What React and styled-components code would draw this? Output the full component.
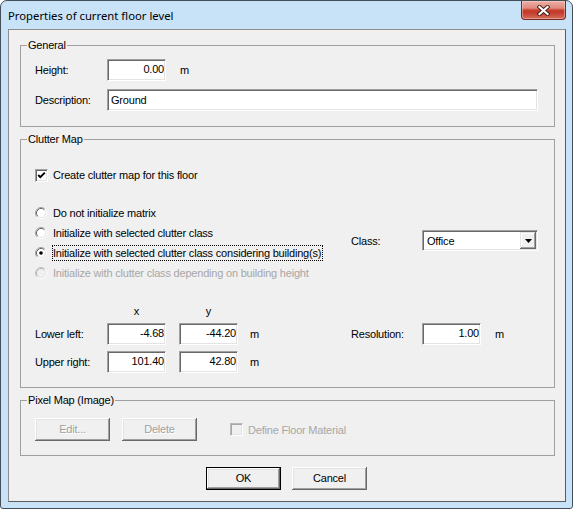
import React from 'react';
import styled, { createGlobalStyle } from 'styled-components';

const GlobalStyle = createGlobalStyle`
  html, body {
    margin: 0;
    padding: 0;
    background: #ffffff;
  }
  body {
    font-family: "Liberation Sans", Arial, sans-serif;
  }
`;

const font = `
  font-family: "Liberation Sans", Arial, sans-serif;
  font-size: 11px;
  letter-spacing: -0.2px;
`;

const Window = styled.div`
  width: 573px;
  height: 509px;
  box-sizing: border-box;
  background: #c8e3f8;
  border: 1px solid #434e58;
  border-radius: 7px 7px 3px 3px;
  display: flex;
  flex-direction: column;
  overflow: hidden;
`;

const TitleBar = styled.div`
  height: 28px;
  flex: none;
  display: flex;
  justify-content: space-between;
  align-items: flex-start;
  padding: 0 6px 0 7px;
`;

const Title = styled.span`
  align-self: center;
  font-family: "Noto Sans", "Open Sans", sans-serif;
  font-size: 11.3px;
  color: #000;
  margin-top: 1px;
`;

const CloseButton = styled.div`
  width: 45px;
  height: 19px;
  box-sizing: border-box;
  border: 1px solid #6f2b22;
  border-top: none;
  border-radius: 0 0 4px 4px;
  background: linear-gradient(
    #eab0a6 0%,
    #e0897b 40%,
    #c9402f 50%,
    #c13a2a 62%,
    #d56b5c 100%
  );
  box-shadow: inset 0 0 0 1px rgba(255, 220, 210, 0.45);
  display: flex;
  align-items: center;
  justify-content: center;
`;

const Client = styled.div`
  flex: 1;
  margin: 0 6px 6px 7px;
  background: #f0f0f0;
  border: 1px solid;
  border-color: #8d8d8d #5c5c5c #5c5c5c #8d8d8d;
  padding: 15px 10px 11px 11px;
  display: flex;
  flex-direction: column;
`;

const Group = styled.div`
  position: relative;
  border: 1px solid #a0a0a0;
  margin-top: ${p => p.$mt || 0}px;
  padding: ${p => p.$pad};
  display: flex;
  flex-direction: column;
`;

const Caption = styled.span`
  ${font}
  position: absolute;
  top: -8px;
  left: 6px;
  padding: 0 1px;
  line-height: 14px;
  background: #f0f0f0;
  color: #000;
`;

const Row = styled.div`
  display: flex;
  align-items: center;
  height: ${p => p.$h || 22}px;
  margin-top: ${p => p.$mt || 0}px;
`;

const Label = styled.span`
  ${font}
  color: ${p => (p.$disabled ? '#a7a7a7' : '#000')};
  width: ${p => (p.$w ? `${p.$w}px` : 'auto')};
  margin-left: ${p => p.$ml || 0}px;
  flex: none;
  white-space: nowrap;
`;

const Field = styled.input`
  ${font}
  box-sizing: border-box;
  width: ${p => p.$w || 59}px;
  height: 22px;
  margin: 0 0 0 ${p => p.$ml || 0}px;
  padding: 0 1px ${p => (p.$num ? 2 : 1)}px 3px;
  border: 1px solid;
  border-color: #a0a0a0 #ffffff #ffffff #a0a0a0;
  box-shadow: inset 1px 1px 0 #696969, inset -1px -1px 0 #e3e3e3;
  background: #fff;
  color: #000;
  text-align: ${p => (p.$num ? 'right' : 'left')};
  outline: none;
  flex: none;
`;

const CheckBox = styled.span`
  width: 13px;
  height: 13px;
  box-sizing: border-box;
  flex: none;
  border: 1px solid;
  border-color: ${p =>
    p.$disabled ? '#b9b9b9 #ffffff #ffffff #b9b9b9' : '#a0a0a0 #ffffff #ffffff #a0a0a0'};
  box-shadow: ${p =>
    p.$disabled
      ? 'inset 1px 1px 0 #a7a7a7, inset -1px -1px 0 #e3e3e3'
      : 'inset 1px 1px 0 #696969, inset -1px -1px 0 #e3e3e3'};
  background: ${p => (p.$disabled ? '#f0f0f0' : '#fff')};
  margin-left: ${p => p.$ml || 0}px;
  display: flex;
  align-items: center;
  justify-content: center;
`;

const RadioList = styled.div`
  width: 316px;
  display: flex;
  flex-direction: column;
`;

const RadioRow = styled.div`
  display: flex;
  align-items: center;
  height: 20px;
`;

const RadioText = styled.span`
  ${font}
  color: ${p => (p.$disabled ? '#a7a7a7' : '#000')};
  white-space: nowrap;
  line-height: 14px;
  margin-left: ${p => (p.$focus ? 5 : 6)}px;
  padding-right: ${p => (p.$focus ? 1 : 0)}px;
  border: ${p => (p.$focus ? '1px dotted #000' : 'none')};
`;

const Options = styled.div`
  display: flex;
  margin-top: 20px;
`;

const ClassCell = styled.div`
  display: flex;
  align-items: center;
  padding-top: 27px;
  align-self: flex-start;
`;

const Combo = styled.div`
  width: 116px;
  height: 21px;
  box-sizing: border-box;
  border: 1px solid;
  border-color: #a0a0a0 #ffffff #ffffff #a0a0a0;
  box-shadow: inset 1px 1px 0 #696969, inset -1px -1px 0 #e3e3e3;
  background: #fff;
  padding: 1px;
  display: flex;
  align-items: center;
`;

const ComboText = styled.span`
  ${font}
  flex: 1;
  padding-left: 3px;
  color: #000;
`;

const DropButton = styled.span`
  width: 16px;
  height: 17px;
  box-sizing: border-box;
  background: #f0f0f0;
  box-shadow: inset -1px -1px 0 #696969, inset 1px 1px 0 #e3e3e3,
    inset -2px -2px 0 #a0a0a0, inset 2px 2px 0 #ffffff;
  display: flex;
  align-items: center;
  justify-content: center;
`;

const Axis = styled.span`
  ${font}
  width: 59px;
  text-align: center;
  margin-left: ${p => p.$ml || 0}px;
  color: #000;
`;

const Button = styled.button`
  ${font}
  width: 75px;
  height: 23px;
  flex: none;
  box-sizing: border-box;
  margin: 0 0 0 ${p => p.$ml || 0}px;
  padding: 0 0 1px;
  background: #f0f0f0;
  color: ${p => (p.disabled ? '#a0a0a0' : '#000')};
  text-shadow: ${p => (p.disabled ? '1px 1px 0 #ffffff' : 'none')};
  border: ${p => (p.$default ? '1px solid #000' : 'none')};
  box-shadow: inset -1px -1px 0 #696969, inset 1px 1px 0 #ffffff,
    inset -2px -2px 0 #a0a0a0, inset 2px 2px 0 #e3e3e3;
  cursor: default;
`;

const Footer = styled.div`
  display: flex;
  justify-content: center;
  margin-top: 11px;
  padding-right: 2px;
`;

const CloseGlyph = () => (
  <svg width="13" height="11" viewBox="0 0 13 11">
    <path d="M2.5 2 L10.5 9 M10.5 2 L2.5 9" stroke="#4a1a14" strokeWidth="4" strokeLinecap="square" />
    <path d="M2.5 2 L10.5 9 M10.5 2 L2.5 9" stroke="#ffffff" strokeWidth="2.2" strokeLinecap="square" />
  </svg>
);

const CheckMark = () => (
  <svg width="9" height="9" viewBox="0 0 9 9">
    <path d="M1.2 4 L3.3 6.2 L7.8 1.6" fill="none" stroke="#000" strokeWidth="1.9" />
  </svg>
);

const Radio = ({ checked, disabled }) => (
  <svg width="12" height="12" viewBox="0 0 12 12" style={{ flex: 'none' }}>
    <circle cx="6" cy="6" r="4.2" fill={disabled ? '#f0f0f0' : '#fff'} />
    <path d="M2.11 9.89 A5.5 5.5 0 0 1 9.89 2.11" fill="none" stroke={disabled ? '#c2c2c2' : '#a0a0a0'} />
    <path d="M9.89 2.11 A5.5 5.5 0 0 1 2.11 9.89" fill="none" stroke="#ffffff" />
    <path d="M2.82 9.18 A4.5 4.5 0 0 1 9.18 2.82" fill="none" stroke={disabled ? '#b4b4b4' : '#696969'} />
    <path d="M9.18 2.82 A4.5 4.5 0 0 1 2.82 9.18" fill="none" stroke="#e3e3e3" />
    {checked && <circle cx="6" cy="6" r="1.8" fill="#000" />}
  </svg>
);

const ArrowDown = () => (
  <svg width="7" height="4" viewBox="0 0 7 4">
    <polygon points="0,0 7,0 3.5,4" fill="#000" />
  </svg>
);

const radios = [
  { text: 'Do not initialize matrix' },
  { text: 'Initialize with selected clutter class' },
  { text: 'Initialize with selected clutter class considering building(s)', checked: true, focus: true },
  { text: 'Initialize with clutter class depending on building height', disabled: true },
];

export default function App() {
  return (
    <>
      <GlobalStyle />
      <Window>
        <TitleBar>
          <Title>Properties of current floor level</Title>
          <CloseButton>
            <CloseGlyph />
          </CloseButton>
        </TitleBar>

        <Client>
          <Group $pad="13px 15px 15px 14px">
            <Caption>General</Caption>
            <Row>
              <Label $w={72}>Height:</Label>
              <Field $num defaultValue="0.00" readOnly />
              <Label $ml={14}>m</Label>
            </Row>
            <Row $mt={8}>
              <Label $w={72}>Description:</Label>
              <Field $w={431} defaultValue="Ground" readOnly />
            </Row>
          </Group>

          <Group $mt={12} $pad="27px 15px 14px 14px">
            <Caption>Clutter Map</Caption>
            <Row $h={16}>
              <CheckBox>
                <CheckMark />
              </CheckBox>
              <Label $ml={5}>Create clutter map for this floor</Label>
            </Row>

            <Options>
              <RadioList>
                {radios.map(r => (
                  <RadioRow key={r.text}>
                    <Radio checked={r.checked} disabled={r.disabled} />
                    <RadioText $focus={r.focus} $disabled={r.disabled}>
                      {r.text}
                    </RadioText>
                  </RadioRow>
                ))}
              </RadioList>
              <ClassCell>
                <Label $w={71}>Class:</Label>
                <Combo>
                  <ComboText>Office</ComboText>
                  <DropButton>
                    <ArrowDown />
                  </DropButton>
                </Combo>
              </ClassCell>
            </Options>

            <Row $h={14} $mt={21}>
              <Axis $ml={72}>x</Axis>
              <Axis $ml={13}>y</Axis>
            </Row>
            <Row $mt={5}>
              <Label $w={72}>Lower left:</Label>
              <Field $num defaultValue="-4.68" readOnly />
              <Field $num $ml={13} defaultValue="-44.20" readOnly />
              <Label $ml={12} $w={101}>m</Label>
              <Label $w={71}>Resolution:</Label>
              <Field $num defaultValue="1.00" readOnly />
              <Label $ml={14}>m</Label>
            </Row>
            <Row $mt={6}>
              <Label $w={72}>Upper right:</Label>
              <Field $num defaultValue="101.40" readOnly />
              <Field $num $ml={13} defaultValue="42.80" readOnly />
              <Label $ml={12}>m</Label>
            </Row>
          </Group>

          <Group $mt={12} $pad="17px 15px 14px 14px">
            <Caption>Pixel Map (Image)</Caption>
            <Row $h={23}>
              <Button disabled>Edit...</Button>
              <Button disabled $ml={12}>Delete</Button>
              <CheckBox $disabled $ml={33} />
              <Label $disabled $ml={5}>Define Floor Material</Label>
            </Row>
          </Group>

          <Footer>
            <Button $default>OK</Button>
            <Button $ml={11}>Cancel</Button>
          </Footer>
        </Client>
      </Window>
    </>
  );
}
